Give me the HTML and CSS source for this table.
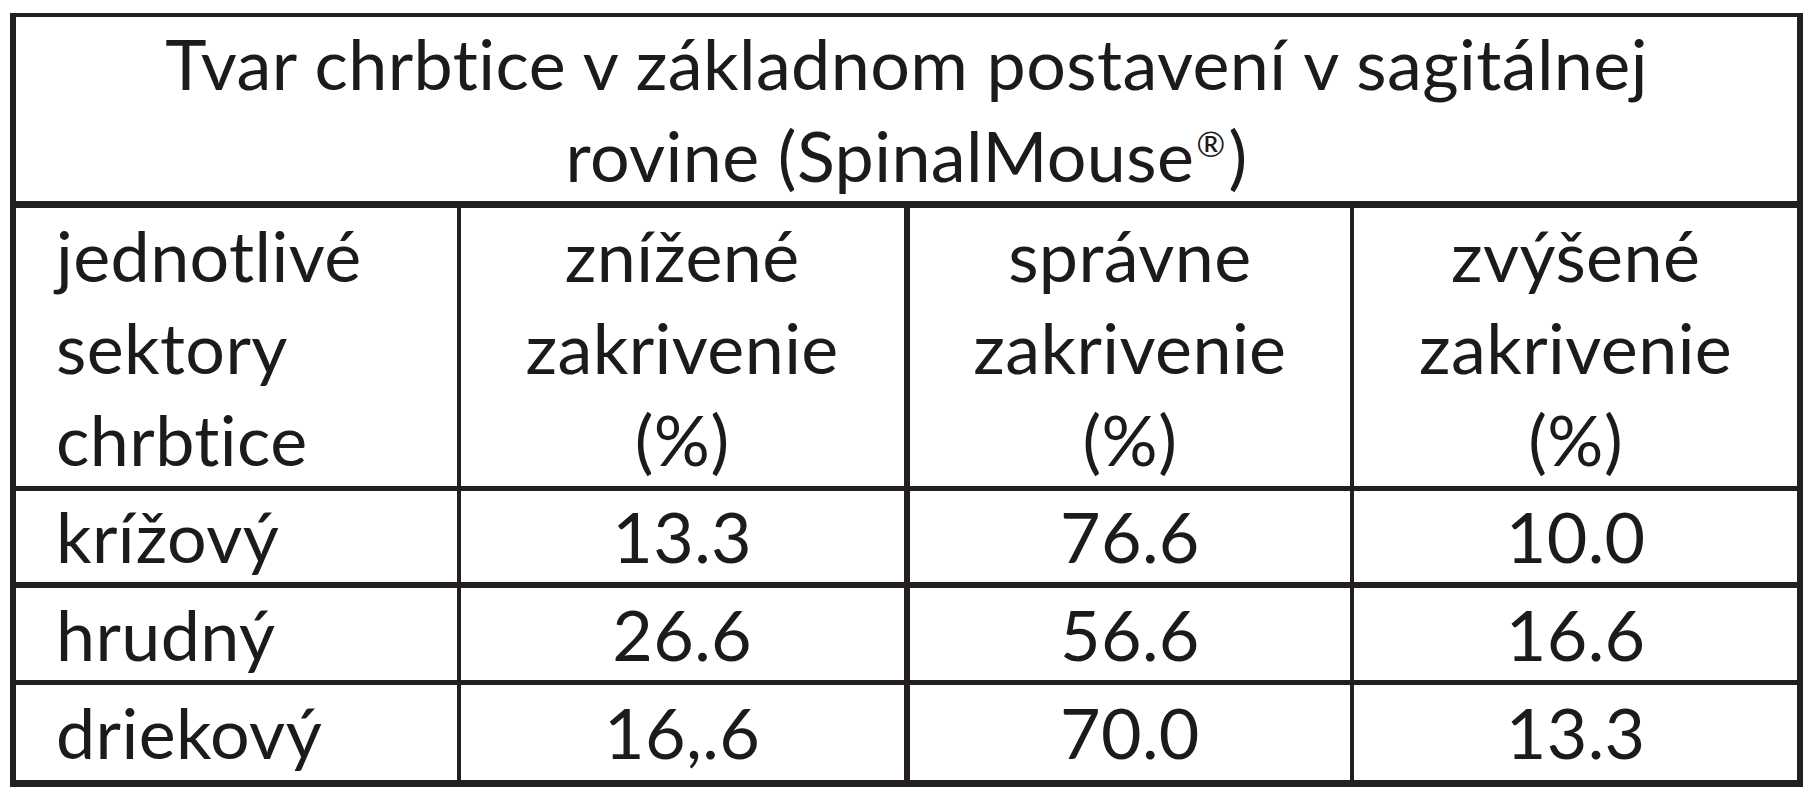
FILE: index.html
```html
<!DOCTYPE html>
<html lang="sk">
<head>
<meta charset="utf-8">
<title>Tvar chrbtice</title>
<link rel="stylesheet" href="styles.css">
</head>
<body>
<table class="spine">
  <tr>
    <th class="title" colspan="4">Tvar chrbtice v základnom postavení v sagitálnej rovine (SpinalMouse<span class="reg">®</span>)</th>
  </tr>
  <tr class="head">
    <td class="c1 left">jednotlivé<br>sektory<br>chrbtice</td>
    <td class="c2">znížené<br>zakrivenie<br>(%)</td>
    <td class="c3">správne<br>zakrivenie<br>(%)</td>
    <td class="c4">zvýšené<br>zakrivenie<br>(%)</td>
  </tr>
  <tr class="r1">
    <td class="left">krížový</td>
    <td>13.3</td>
    <td>76.6</td>
    <td>10.0</td>
  </tr>
  <tr class="r2">
    <td class="left">hrudný</td>
    <td>26.6</td>
    <td>56.6</td>
    <td>16.6</td>
  </tr>
  <tr class="r3">
    <td class="left">driekový</td>
    <td>16,.6</td>
    <td>70.0</td>
    <td>13.3</td>
  </tr>
</table>
</body>
</html>
```
FILE: styles.css
```css
html, body {
  margin: 0;
  padding: 0;
  background: #ffffff;
}
body {
  padding: 13px 0 0 10px;
}
.spine {
  border-collapse: separate;
  border-spacing: 0;
  table-layout: fixed;
  width: 1793px;
  border-right: 6px solid #231f20;
  border-bottom: 7px solid #231f20;
  font-family: "Lato", "Liberation Sans", sans-serif;
  font-size: 70px;
  letter-spacing: 0.4px;
  color: #1c1a1b;
}
.spine th, .spine td {
  box-sizing: border-box;
  padding: 0;
  font-weight: normal;
  text-align: center;
  vertical-align: middle;
  line-height: 92px;
  border-left: 4px solid #231f20;
}
.spine td:nth-child(3) {
  border-left-width: 6px;
}
.spine td.left, .spine th.title {
  border-left-width: 6px;
}
.spine td.left {
  text-align: left;
  padding-left: 40px;
}
.title {
  height: 188px;
  padding: 0 90px !important;
  border-top: 4px solid #231f20;
}
.reg {
  font-size: 0.5em;
  line-height: 1;
  vertical-align: 0.72em;
  letter-spacing: 0;
  margin: 0 3px 0 2px;
}
.c1 { width: 439px; }
.c2 { width: 452px; }
.c3 { width: 449px; }
.c4 { width: 447px; }
.head td {
  height: 285px;
  border-top: 7px solid #231f20;
}
.r1 td {
  height: 96px;
  border-top: 5px solid #231f20;
  line-height: 91px;
}
.r2 td {
  height: 98px;
  border-top: 6px solid #231f20;
  line-height: 92px;
}
.r3 td {
  height: 100px;
  border-top: 5px solid #231f20;
  line-height: 95px;
}
```
